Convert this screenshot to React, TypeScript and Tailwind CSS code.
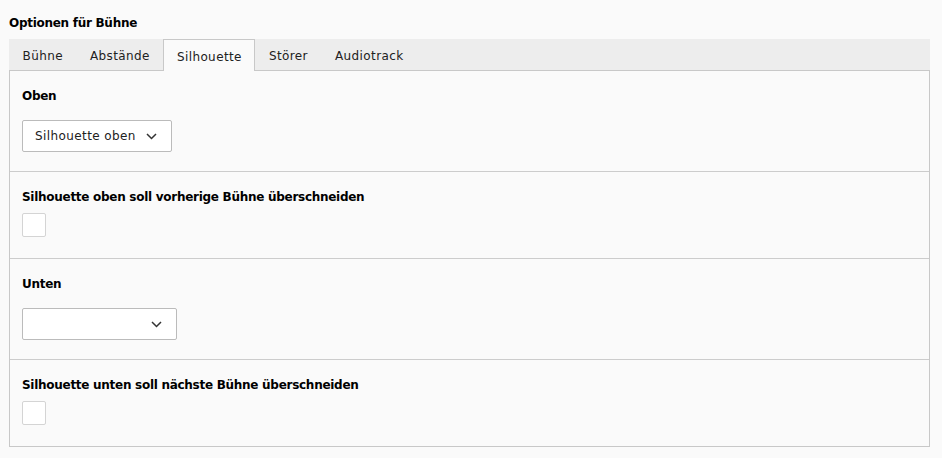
import React from 'react';

const tabs = ['Bühne', 'Abstände', 'Silhouette', 'Störer', 'Audiotrack'];

const Chevron = () => (
  <svg width="11" height="7" viewBox="0 0 11 7" fill="none">
    <path d="M1 1l4.5 4.5L10 1" stroke="#333" strokeWidth="1.5" />
  </svg>
);

const Select = ({ value, width }: { value: string; width: string }) => (
  <div className={`flex h-[32px] items-center justify-between rounded-[2px] border border-[#bbbbbb] bg-white pl-[12px] ${width}`}>
    <span className="tracking-[0.4px] text-[#212121]">{value}</span>
    <Chevron />
  </div>
);

const Checkbox = () => <div className="h-[24px] w-[24px] rounded-[2px] border border-[#d4d4d4] bg-white" />;

// bold labels in the backend form
const Label = ({ children }: { children: React.ReactNode }) => (
  <div className="font-bold tracking-[-0.28px]">{children}</div>
);

const App: React.FC = () => {
  return (
    <div className="min-h-[458px] bg-[#fafafa] pl-[9px] pt-[14px] text-[12px] leading-[18px] text-black" style={{ fontFamily: '"DejaVu Sans", Verdana, sans-serif' }}>
      <div className="w-[921px]">
        <h2 className="font-bold tracking-[-0.28px]">Optionen für Bühne</h2>

        {/* tabs */}
        <div className="mt-[7px] flex h-[32px] border-b border-[#c8c8c8] bg-[#ededed]">
          {tabs.map((tab) => (
            <div
              key={tab}
              className={
                tab === 'Silhouette'
                  ? '-mb-px flex h-[32px] items-center border-x border-t border-[#c8c8c8] bg-[#fafafa] px-[12px] pt-[2px] tracking-[0.4px] text-[#212121]'
                  : 'flex h-[31px] items-center border-x border-transparent px-[12px] pt-[2px] tracking-[0.4px] text-[#212121]'
              }
            >
              <span className="mx-[0.5px]">{tab}</span>
            </div>
          ))}
        </div>

        {/* panel */}
        <div className="border-x border-b border-[#c8c8c8]">
          <div className="border-b border-[#cccccc] px-[12px] pb-[19px] pt-[16px]">
            <Label>Oben</Label>
            <div className="mt-[15px]">
              <Select value="Silhouette oben" width="w-[150px] pr-[14px]" />
            </div>
          </div>
          <div className="border-b border-[#cccccc] px-[12px] pb-[21px] pt-[16px]">
            <Label>Silhouette oben soll vorherige Bühne überschneiden</Label>
            <div className="mt-[7px]">
              <Checkbox />
            </div>
          </div>
          <div className="border-b border-[#cccccc] px-[12px] pb-[19px] pt-[16px]">
            <Label>Unten</Label>
            <div className="mt-[15px]">
              <Select value="" width="w-[155px] pr-[14px]" />
            </div>
          </div>
          <div className="px-[12px] pb-[21px] pt-[16px]">
            <Label>Silhouette unten soll nächste Bühne überschneiden</Label>
            <div className="mt-[7px]">
              <Checkbox />
            </div>
          </div>
        </div>
      </div>
    </div>
  );
};

export default App;
